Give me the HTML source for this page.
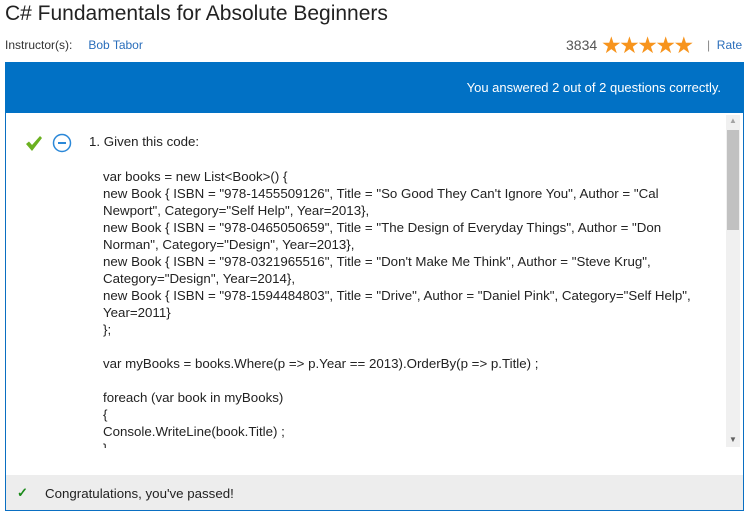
<!DOCTYPE html>
<html><head><style>
body{margin:0;width:749px;height:521px;background:#fff;font-family:"Liberation Sans",sans-serif;color:#222;position:relative;overflow:hidden}
.a{position:absolute;white-space:nowrap}
.code div{height:17px;line-height:17px}
</style></head><body>
<div class="a" style="left:5px;top:2px;font-size:21px;color:#222">C# Fundamentals for Absolute Beginners</div>
<div class="a" style="left:5px;top:38px;font-size:12px;color:#333">Instructor(s):&nbsp;&nbsp; <span style="color:#2a6ebb;margin-left:6px">Bob Tabor</span></div>
<div class="a" style="left:566px;top:37px;font-size:14px;color:#555">3834</div>
<div class="a" style="left:601px;top:32px;font-size:23px;color:#f7941d;letter-spacing:-2.5px">★★★★★</div>
<div class="a" style="left:707px;top:38px;font-size:12px;color:#2a6ebb"><span style="color:#888">|</span>&nbsp; Rate</div>
<div class="a" style="left:5px;top:62px;width:737px;height:448px;border:1px solid #0a6fc2;border-top:none"></div>
<div class="a" style="left:5px;top:62px;width:739px;height:51px;background:#0171c5"></div>
<div class="a" style="right:28px;top:80px;font-size:13px;color:#fff">You answered 2 out of 2 questions correctly.</div>
<div class="a" style="left:726px;top:115px;width:14px;height:332px;background:#f0f0f0"></div>
<div class="a" style="left:727px;top:130px;width:12px;height:100px;background:#c1c1c1"></div>
<div class="a" style="left:729px;top:116px;font-size:8px;color:#a3a3a3">▲</div>
<div class="a" style="left:729px;top:435px;font-size:8px;color:#606060">▼</div>
<svg class="a" style="left:25px;top:135px" width="18" height="18"><path d="M1 9 L4 6.5 L7 10 L15 1 L17 3 L7 16 Z" fill="#6bb120"/></svg>
<svg class="a" style="left:52px;top:133px" width="20" height="20"><circle cx="10" cy="10" r="8.5" fill="none" stroke="#2b88d8" stroke-width="1.5"/><rect x="6" y="9" width="8" height="2" fill="#2b88d8"/></svg>
<div class="a" style="left:89px;top:134px;font-size:13.3px">1. Given this code:</div>
<div class="a code" style="left:103px;top:168px;font-size:13.3px;height:280px;overflow:hidden">
<div>var books = new List&lt;Book&gt;() {</div>
<div>new Book { ISBN = "978-1455509126", Title = "So Good They Can't Ignore You", Author = "Cal</div>
<div>Newport", Category="Self Help", Year=2013},</div>
<div>new Book { ISBN = "978-0465050659", Title = "The Design of Everyday Things", Author = "Don</div>
<div>Norman", Category="Design", Year=2013},</div>
<div>new Book { ISBN = "978-0321965516", Title = "Don't Make Me Think", Author = "Steve Krug",</div>
<div>Category="Design", Year=2014},</div>
<div>new Book { ISBN = "978-1594484803", Title = "Drive", Author = "Daniel Pink", Category="Self Help",</div>
<div>Year=2011}</div>
<div>};</div>
<div>&nbsp;</div>
<div>var myBooks = books.Where(p =&gt; p.Year == 2013).OrderBy(p =&gt; p.Title) ;</div>
<div>&nbsp;</div>
<div>foreach (var book in myBooks)</div>
<div>{</div>
<div>Console.WriteLine(book.Title) ;</div>
<div>}</div>
</div>
<div class="a" style="left:6px;top:475px;width:737px;height:35px;background:#ededed"></div>
<div class="a" style="left:17px;top:485px;font-size:13px;font-weight:bold;color:#1a8a1a">✓</div>
<div class="a" style="left:45px;top:486px;font-size:13.3px;color:#222">Congratulations, you've passed!</div>
</body></html>
